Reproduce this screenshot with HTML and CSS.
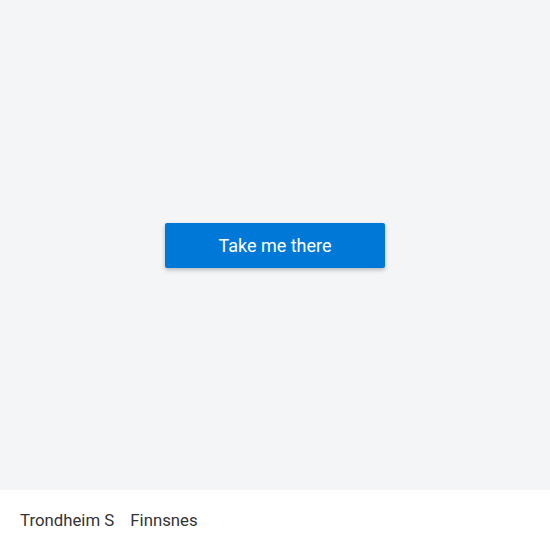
FILE: index.html
```html
<!DOCTYPE html>
<html lang="no">
<head>
<meta charset="utf-8">
<title>Trondheim S – Finnsnes</title>
<link rel="stylesheet" href="styles.css">
</head>
<body>
  <main class="stage">
    <button class="cta" type="button">Take me there</button>
  </main>
  <footer class="route">
    <span class="stop">Trondheim S</span>
    <span class="stop">Finnsnes</span>
  </footer>
</body>
</html>
```
FILE: styles.css
```css
* { box-sizing: border-box; }

html, body {
  margin: 0;
  height: 100%;
}

body {
  display: flex;
  flex-direction: column;
  font-family: Roboto, "Liberation Sans", sans-serif;
  background: #ffffff;
}

.stage {
  height: 490px;
  background: #f4f5f7;
  display: flex;
  align-items: center;
  justify-content: center;
}

.cta {
  width: 220px;
  height: 45px;
  border: none;
  border-radius: 2px;
  background: #0078d7;
  color: #ffffff;
  font-family: inherit;
  font-size: 18px;
  box-shadow: 0 2px 4px rgba(0, 0, 0, 0.25);
  cursor: pointer;
}

.route {
  flex: 1;
  display: flex;
  align-items: center;
  gap: 16px;
  padding: 0 20px;
  font-size: 16.8px;
  color: #333333;
}
```
